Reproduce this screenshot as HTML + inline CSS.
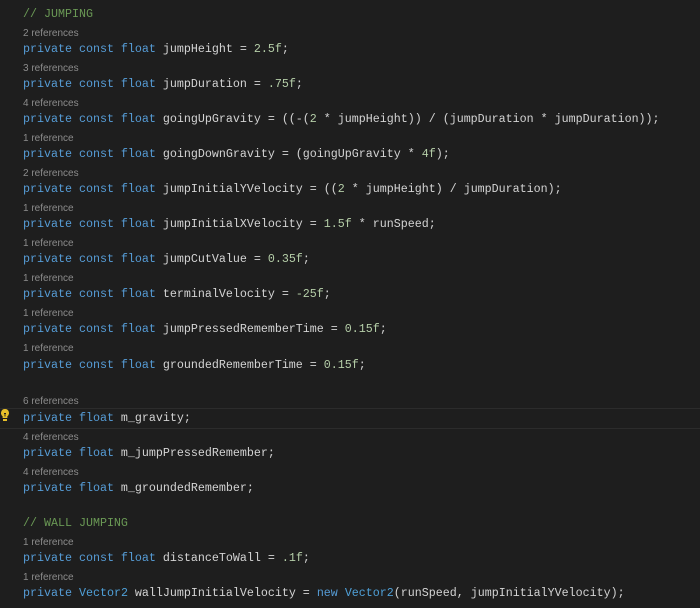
<!DOCTYPE html>
<html><head><meta charset="utf-8"><style>
html,body{margin:0;padding:0;background:#1e1e1e;width:700px;height:608px;overflow:hidden;position:relative}
.c{position:absolute;left:23px;height:20px;line-height:20px;font-family:"Liberation Mono",monospace;font-size:11.67px;color:#d4d4d4;white-space:pre;margin-top:1px}
.r{position:absolute;left:23px;height:14px;line-height:14px;font-family:"Liberation Sans",sans-serif;font-size:10px;color:#8c8c8c;white-space:pre;margin-top:2px}
.k{color:#569cd6}.n{color:#b5cea8}.g{color:#6a9955}.t{color:#4fa0d8}
.hl{position:absolute;left:0;width:700px;top:408px;height:19px;border-top:1px solid #2c2c2c;border-bottom:1px solid #2c2c2c}
</style></head><body>
<div class="hl"></div>
<div class="c g" style="top:3px">// JUMPING</div>
<div class="r" style="top:25px">2 references</div>
<div class="c" style="top:38px"><span class="k">private const float</span> jumpHeight = <span class="n">2.5f</span>;</div>
<div class="r" style="top:60px">3 references</div>
<div class="c" style="top:73px"><span class="k">private const float</span> jumpDuration = <span class="n">.75f</span>;</div>
<div class="r" style="top:95px">4 references</div>
<div class="c" style="top:108px"><span class="k">private const float</span> goingUpGravity = ((-(<span class="n">2</span> * jumpHeight)) / (jumpDuration * jumpDuration));</div>
<div class="r" style="top:130px">1 reference</div>
<div class="c" style="top:143px"><span class="k">private const float</span> goingDownGravity = (goingUpGravity * <span class="n">4f</span>);</div>
<div class="r" style="top:165px">2 references</div>
<div class="c" style="top:178px"><span class="k">private const float</span> jumpInitialYVelocity = ((<span class="n">2</span> * jumpHeight) / jumpDuration);</div>
<div class="r" style="top:200px">1 reference</div>
<div class="c" style="top:213px"><span class="k">private const float</span> jumpInitialXVelocity = <span class="n">1.5f</span> * runSpeed;</div>
<div class="r" style="top:235px">1 reference</div>
<div class="c" style="top:248px"><span class="k">private const float</span> jumpCutValue = <span class="n">0.35f</span>;</div>
<div class="r" style="top:270px">1 reference</div>
<div class="c" style="top:283px"><span class="k">private const float</span> terminalVelocity = <span class="n">-25f</span>;</div>
<div class="r" style="top:305px">1 reference</div>
<div class="c" style="top:318px"><span class="k">private const float</span> jumpPressedRememberTime = <span class="n">0.15f</span>;</div>
<div class="r" style="top:340px">1 reference</div>
<div class="c" style="top:354px"><span class="k">private const float</span> groundedRememberTime = <span class="n">0.15f</span>;</div>
<div class="r" style="top:393px">6 references</div>
<svg style="position:absolute;left:0;top:408px" width="10" height="14" viewBox="0 0 10 14"><path d="M5 1a4 4 0 0 0-2.4 7.2V10h4.8V8.2A4 4 0 0 0 5 1z" fill="#e8c02a"/><rect x="3" y="11" width="4" height="2" fill="#e8c02a"/><path d="M4 5.5h2M5 5.5v3" stroke="#1e1e1e" stroke-width="0.9"/></svg>
<div class="c" style="top:407px"><span class="k">private float</span> m_gravity;</div>
<div class="r" style="top:429px">4 references</div>
<div class="c" style="top:442px"><span class="k">private float</span> m_jumpPressedRemember;</div>
<div class="r" style="top:464px">4 references</div>
<div class="c" style="top:477px"><span class="k">private float</span> m_groundedRemember;</div>
<div class="c g" style="top:512px">// WALL JUMPING</div>
<div class="r" style="top:534px">1 reference</div>
<div class="c" style="top:547px"><span class="k">private const float</span> distanceToWall = <span class="n">.1f</span>;</div>
<div class="r" style="top:569px">1 reference</div>
<div class="c" style="top:582px"><span class="k">private</span> <span class="t">Vector2</span> wallJumpInitialVelocity = <span class="k">new</span> <span class="t">Vector2</span>(runSpeed, jumpInitialYVelocity);</div>
</body></html>
